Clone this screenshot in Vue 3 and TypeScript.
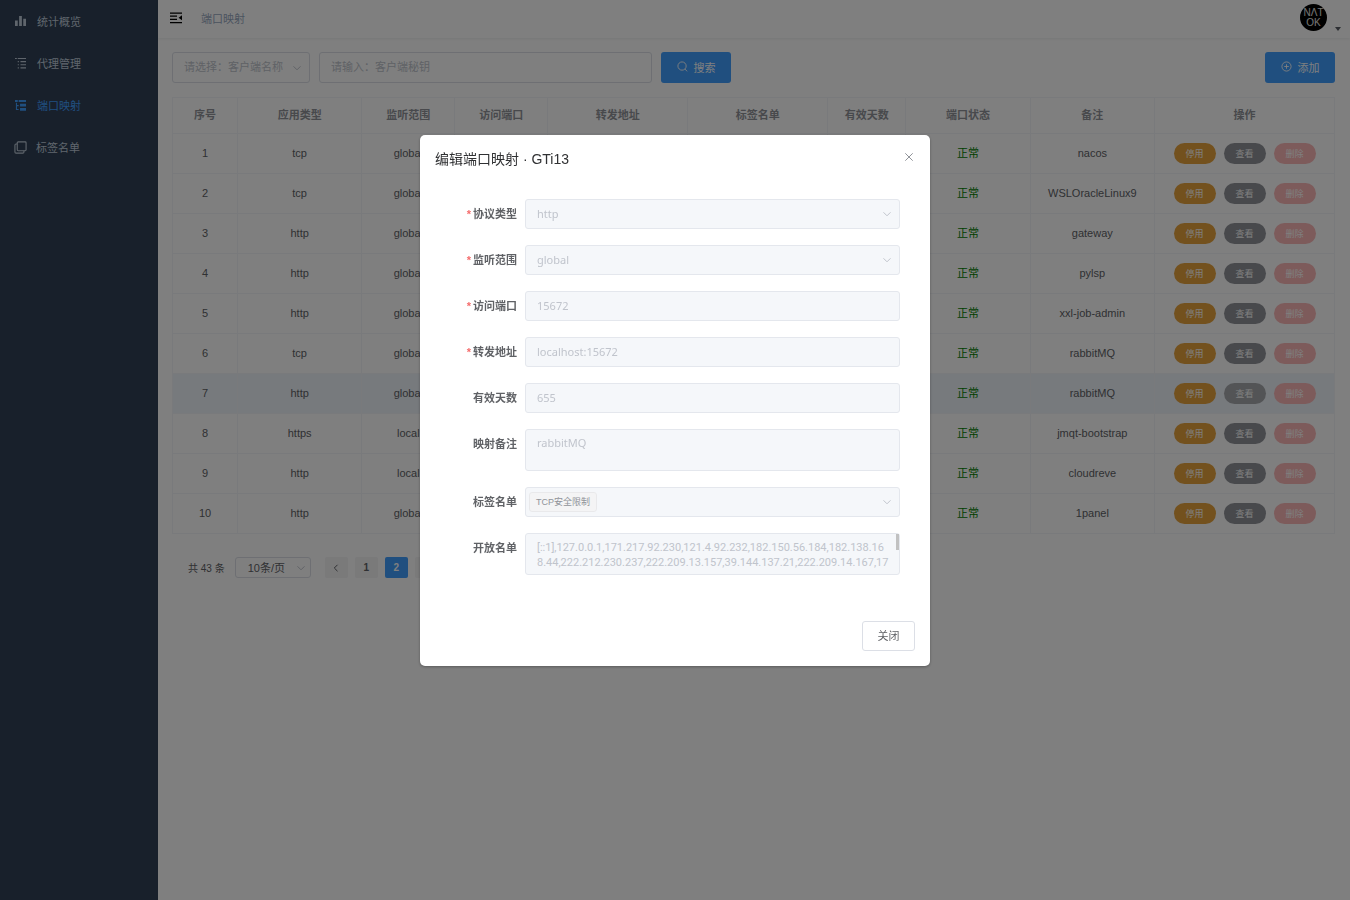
<script setup lang="ts">
import { ref } from 'vue'

interface Mapping {
  id: number
  type: string
  scope: string
  remark: string
}

const rows: Mapping[] = [
  { id: 1, type: 'tcp', scope: 'global', remark: 'nacos' },
  { id: 2, type: 'tcp', scope: 'global', remark: 'WSLOracleLinux9' },
  { id: 3, type: 'http', scope: 'global', remark: 'gateway' },
  { id: 4, type: 'http', scope: 'global', remark: 'pylsp' },
  { id: 5, type: 'http', scope: 'global', remark: 'xxl-job-admin' },
  { id: 6, type: 'tcp', scope: 'global', remark: 'rabbitMQ' },
  { id: 7, type: 'http', scope: 'global', remark: 'rabbitMQ' },
  { id: 8, type: 'https', scope: 'local', remark: 'jmqt-bootstrap' },
  { id: 9, type: 'http', scope: 'local', remark: 'cloudreve' },
  { id: 10, type: 'http', scope: 'global', remark: '1panel' },
]

const activeRow = ref(7)
const page = ref(2)
const pages = [1, 2, 3, 4, 5]
const dialogOpen = ref(true)
const remark = ref('rabbitMQ')
const openList = ref(
  '[::1],127.0.0.1,171.217.92.230,121.4.92.232,182.150.56.184,182.138.168.44,222.212.230.237,222.209.13.157,39.144.137.21,222.209.14.167,17',
)
</script>

<template>
  <div class="layout">
    <nav class="sidebar">
      <a href="#" class="menu-item">
        <svg viewBox="0 0 12 12" class="menu-icon"><path fill="currentColor" d="M0 5h3v6H0zM4.500 0h3v11h-3zM9 3h3v8H9z" /></svg>
        <span>统计概览</span>
      </a>
      <a href="#" class="menu-item">
        <svg viewBox="0 0 12 12" class="menu-icon"><path fill="currentColor" d="M0 0h2v1.200H0zM3 0h9v1.200H3zM3 3.400h1.200v1.200H3zM6 3.400h6v1.200H6zM3 6.800h1.200V8H3zM6 6.800h6V8H6zM3 10.200h1.200v1.200H3zM6 10.200h6v1.200H6z" /></svg>
        <span>代理管理</span>
      </a>
      <a href="#" class="menu-item active">
        <svg viewBox="0 0 12 12" class="menu-icon"><path fill="currentColor" d="M0 0h3v2.200H0zM4 0h8v2.200H4zM1 3h1.200v2.500H4v1.200H2.200v3H4v1.200H1zM5.500 4h6.500v3.200H5.500zM5.500 8.600h6.500v3.200H5.500z" /></svg>
        <span>端口映射</span>
      </a>
      <a href="#" class="menu-item copy">
        <svg viewBox="0 0 14 14" class="menu-icon"><g fill="none" stroke="currentColor" stroke-width="1.200"><rect x="3.500" y="1" width="9.500" height="9.500" rx="1" /><path d="M3.500 3.300H2.200q-1.200 0-1.200 1.200v7.300Q1 13 2.200 13h7.300q1.200 0 1.200-1.200v-1.300" /></g></svg>
        <span>标签名单</span>
      </a>
    </nav>

    <div class="main">
      <header class="navbar">
        <button type="button" class="fold" aria-label="收起菜单">
          <svg viewBox="0 0 12 12"><path fill="#000" d="M0 .500h12v1.200H0zM0 3.500h7v1.200H0zM0 6.800h7V8H0zM0 10h12v1.200H0zM12 3.200v5L8.600 5.700z" /></svg>
        </button>
        <span class="crumb">端口映射</span>
        <button type="button" class="user" aria-label="用户菜单">
          <span class="avatar"><span>NΛT</span><span>OK</span></span>
          <svg viewBox="0 0 6 4" class="caret"><path fill="#5a5e66" d="M0 0h6L3 4z" /></svg>
        </button>
      </header>

      <main class="content">
        <div class="filters">
          <div class="select-wrap filter-type">
            <select aria-label="查询方式"><option>请选择：客户端名称</option></select>
            <svg viewBox="0 0 8 8" class="chevron"><path d="m.500 2.300 3.500 3.500 3.500-3.500" /></svg>
          </div>
          <input class="filter-key" type="text" aria-label="客户端秘钥" placeholder="请输入：客户端秘钥" />
          <button type="button" class="primary">
            <svg viewBox="0 0 12 12"><g fill="none" stroke="currentColor"><circle cx="5.500" cy="5.500" r="4.500" /><path d="m8.800 8.800 2.200 2.500" /></g></svg>
            搜索
          </button>
          <button type="button" class="primary add">
            <svg viewBox="0 0 12 12"><g fill="none" stroke="currentColor"><circle cx="6" cy="6" r="5" /><path d="M6 3.500v5M3.500 6h5" /></g></svg>
            添加
          </button>
        </div>

        <table class="grid">
          <colgroup>
            <col class="c-id" /><col /><col class="c-mid" /><col class="c-mid" /><col class="c-wide" />
            <col class="c-wide" /><col class="c-days" /><col /><col /><col class="c-ops" />
          </colgroup>
          <thead>
            <tr>
              <th>序号</th><th>应用类型</th><th>监听范围</th><th>访问端口</th><th>转发地址</th>
              <th>标签名单</th><th>有效天数</th><th>端口状态</th><th>备注</th><th>操作</th>
            </tr>
          </thead>
          <tbody>
            <tr v-for="row in rows" :key="row.id" :class="{ current: row.id === activeRow }">
              <td>{{ row.id }}</td>
              <td>{{ row.type }}</td>
              <td>{{ row.scope }}</td>
              <td></td>
              <td></td>
              <td></td>
              <td></td>
              <td class="ok">正常</td>
              <td>{{ row.remark }}</td>
              <td>
                <div class="ops">
                  <button type="button" class="pill warn">停用</button>
                  <button type="button" class="pill info" @click="dialogOpen = true">查看</button>
                  <button type="button" class="pill danger" disabled>删除</button>
                </div>
              </td>
            </tr>
          </tbody>
        </table>

        <div class="pagination">
          <span class="total">共 43 条</span>
          <div class="select-wrap page-size">
            <select aria-label="每页条数"><option>10条/页</option></select>
            <svg viewBox="0 0 8 8" class="chevron"><path d="m.500 2.300 3.500 3.500 3.500-3.500" /></svg>
          </div>
          <div class="pager">
            <button type="button" aria-label="上一页"><svg viewBox="0 0 8 8"><path d="M5.500 .800 2.300 4l3.200 3.200" /></svg></button>
            <button v-for="p in pages" :key="p" type="button" :class="{ on: p === page }" @click="page = p">{{ p }}</button>
            <button type="button" aria-label="下一页"><svg viewBox="0 0 8 8"><path d="M2.500 .800 5.700 4 2.500 7.200" /></svg></button>
          </div>
        </div>
      </main>
    </div>

    <div v-if="dialogOpen" class="mask">
      <section class="dialog" role="dialog" aria-modal="true" aria-labelledby="dialog-title">
        <div class="dialog-head">
          <h2 id="dialog-title">编辑端口映射 · GTi13</h2>
          <button type="button" class="close" aria-label="关闭窗口" @click="dialogOpen = false">
            <svg viewBox="0 0 10 10"><path d="m1.300 1.300 7.400 7.400M8.700 1.300 1.300 8.700" /></svg>
          </button>
        </div>
        <form class="form" @submit.prevent>
          <div class="item required">
            <label for="f-type">协议类型</label>
            <div class="select-wrap">
              <select id="f-type" disabled><option>http</option></select>
              <svg viewBox="0 0 8 8" class="chevron"><path d="m.500 2.300 3.500 3.500 3.500-3.500" /></svg>
            </div>
          </div>
          <div class="item required">
            <label for="f-scope">监听范围</label>
            <div class="select-wrap">
              <select id="f-scope" disabled><option>global</option></select>
              <svg viewBox="0 0 8 8" class="chevron"><path d="m.500 2.300 3.500 3.500 3.500-3.500" /></svg>
            </div>
          </div>
          <div class="item required">
            <label for="f-port">访问端口</label>
            <input id="f-port" type="text" value="15672" disabled />
          </div>
          <div class="item required">
            <label for="f-target">转发地址</label>
            <input id="f-target" type="text" value="localhost:15672" disabled />
          </div>
          <div class="item">
            <label for="f-days">有效天数</label>
            <input id="f-days" type="text" value="655" disabled />
          </div>
          <div class="item">
            <label for="f-remark">映射备注</label>
            <textarea id="f-remark" v-model="remark" disabled></textarea>
          </div>
          <div class="item">
            <label for="f-tags">标签名单</label>
            <div class="select-wrap">
              <select id="f-tags" disabled></select>
              <span class="tag">TCP安全限制</span>
              <svg viewBox="0 0 8 8" class="chevron"><path d="m.500 2.300 3.500 3.500 3.500-3.500" /></svg>
            </div>
          </div>
          <div class="item">
            <label for="f-open">开放名单</label>
            <div class="list-wrap">
              <textarea id="f-open" v-model="openList" class="list" disabled></textarea>
              <span class="thumb"></span>
            </div>
          </div>
        </form>
        <div class="dialog-foot">
          <button type="button" class="plain" @click="dialogOpen = false">关闭</button>
        </div>
      </section>
    </div>
  </div>
</template>

<style>
body {
  margin: 0;
  background: #fff;
}
</style>

<style scoped>
* {
  box-sizing: border-box;
}
.layout {
  display: flex;
  min-height: 100vh;
  color: #606266;
  font-family: "Liberation Sans", "Noto Sans CJK SC", sans-serif;
  font-size: 11px;
}
button,
input,
select,
textarea {
  margin: 0;
  font-family: inherit;
  font-size: 11px;
}
button {
  padding: 0;
  border: 0;
  background: none;
  cursor: pointer;
}
svg {
  display: block;
  flex: none;
}

.sidebar {
  flex: none;
  width: 158px;
  background: #304156;
}
.menu-item {
  display: flex;
  align-items: center;
  gap: 11px;
  height: 42px;
  padding-left: 15px;
  color: #bfcbd9;
  text-decoration: none;
}
.menu-item.active {
  color: #409eff;
}
.menu-item.copy {
  gap: 9px;
  padding-left: 14px;
}
.menu-icon {
  width: 11px;
  height: 11px;
}
.copy .menu-icon {
  width: 13px;
  height: 13px;
}

.main {
  flex: 1;
  min-width: 0;
}
.navbar {
  display: flex;
  align-items: center;
  height: 38px;
  padding: 0 9px 3px 12px;
  box-shadow: 0 1px 3px rgba(0, 21, 41, 0.08);
}
.fold svg {
  width: 12px;
  height: 12px;
}
.crumb {
  margin-left: 19px;
  color: #97a8be;
}
.user {
  display: flex;
  align-items: flex-end;
  gap: 8px;
  margin-left: auto;
}
.avatar {
  display: flex;
  flex-direction: column;
  align-items: center;
  justify-content: center;
  width: 27px;
  height: 27px;
  border-radius: 50%;
  background: #000;
  color: #e8e8e8;
  font-size: 10px;
  line-height: 10px;
}
.caret {
  width: 6px;
  height: 4px;
}

.content {
  padding: 14px 15px 14px 14px;
}
.filters {
  display: flex;
  gap: 9px;
  margin-bottom: 14px;
}
.select-wrap {
  position: relative;
  flex: 1;
  min-width: 0;
}
.chevron {
  position: absolute;
  top: 50%;
  right: 9px;
  width: 8px;
  height: 8px;
  margin-top: -4px;
  pointer-events: none;
}
.chevron path,
.pager path,
.close path {
  fill: none;
  stroke: #c0c4cc;
  stroke-width: 1;
}
input,
select,
textarea {
  display: block;
  width: 100%;
  height: 30px;
  padding: 0 11px;
  border: 1px solid #dcdfe6;
  border-radius: 3px;
  outline: 0;
  background: #fff;
  color: #c0c4cc;
  appearance: none;
}
input::placeholder {
  color: #c0c4cc;
  opacity: 1;
}
.filter-type {
  flex: 0 0 138px;
}
.filter-key {
  flex: 0 1 333px;
}
.filters .select-wrap select,
.filter-key {
  height: 31px;
  padding-bottom: 2px;
}
.primary {
  display: flex;
  flex: none;
  align-items: center;
  justify-content: center;
  gap: 6px;
  width: 70px;
  height: 31px;
  padding-bottom: 2px;
  border-radius: 3px;
  background: #409eff;
  color: #fff;
}
.primary svg {
  width: 11px;
  height: 11px;
}
.add {
  margin-left: auto;
}

.grid {
  width: 100%;
  table-layout: fixed;
  border-collapse: collapse;
  text-align: center;
}
.c-id {
  width: 65px;
}
.c-mid {
  width: 93px;
}
.c-wide {
  width: 140px;
}
.c-days {
  width: 78px;
}
.c-ops {
  width: 180px;
}
.grid th,
.grid td {
  height: 40px;
  padding: 0 0 1px;
  border: 1px solid #f3f4f8;
}
.grid th {
  height: 36px;
  padding-bottom: 3px;
  color: #909399;
  font-weight: 700;
}
.grid .current {
  background: #eff4fa;
}
.grid .ok {
  padding-bottom: 3px;
  color: #008000;
}
.ops {
  display: flex;
  justify-content: center;
  gap: 8px;
}
.pill {
  width: 42px;
  height: 21px;
  border-radius: 11px;
  color: #fff;
  font-size: 9px;
}
.warn {
  background: #e6a23c;
}
.info {
  background: #909399;
}
.current .info {
  background: #a6a9ad;
}
.danger {
  background: #fab6b6;
}

.pagination {
  display: flex;
  align-items: center;
  margin-top: 23px;
  padding-left: 16px;
}
.total {
  margin-right: 10px;
  padding-bottom: 1px;
  font-size: 10px;
}
.page-size {
  flex: 0 0 76px;
}
.page-size select {
  height: 21px;
  padding: 0 12px;
  color: #606266;
}
.page-size .chevron {
  right: 6px;
}
.pager {
  display: flex;
  gap: 7px;
  margin-left: 14px;
}
.pager button {
  display: flex;
  align-items: center;
  justify-content: center;
  width: 23px;
  height: 21px;
  border-radius: 2px;
  background: #f4f4f5;
  color: #606266;
  font-size: 10px;
  font-weight: 700;
}
.pager svg {
  width: 8px;
  height: 8px;
}
.pager path {
  stroke: #606266;
}
.pager .on {
  background: #409eff;
  color: #fff;
}

.mask {
  position: fixed;
  inset: 0;
  overflow: auto;
  background: rgba(0, 0, 0, 0.5);
}
.dialog {
  width: 510px;
  max-width: 100%;
  margin: 15vh auto 0;
  border-radius: 5px;
  background: #fff;
  box-shadow: 0 1px 3px rgba(0, 0, 0, 0.3);
}
.dialog-head {
  display: flex;
  align-items: center;
  justify-content: space-between;
  padding: 14px 16px 0 15px;
}
.dialog-head h2 {
  margin: 0;
  color: #303133;
  font-size: 14px;
  font-weight: 400;
  line-height: 20px;
}
.close {
  margin-bottom: 4px;
}
.close svg {
  width: 10px;
  height: 10px;
}
.close path {
  stroke: #909399;
}
.form {
  display: flex;
  flex-direction: column;
  gap: 16px;
  padding: 30px 30px 46px 15px;
}
.item {
  display: flex;
}
.item label {
  flex: none;
  width: 90px;
  padding-right: 8px;
  font-weight: 700;
  line-height: 30px;
  text-align: right;
}
.required label::before {
  content: "*";
  margin-right: 2px;
  color: #f56c6c;
}
.item input,
.item select,
.item textarea {
  padding-bottom: 2px;
  border-color: #e4e7ed;
  background: #f5f7fa;
  color: #c0c4cc;
  font-family: "Noto Sans", "Noto Sans CJK SC", sans-serif;
  opacity: 1;
}
.item textarea {
  height: 42px;
  padding: 5px 11px;
  line-height: 15px;
  resize: none;
}
.list-wrap {
  position: relative;
  flex: 1;
  min-width: 0;
}
.item .list {
  padding: 6px 6px 4px 11px;
  overflow: hidden;
  font-family: Roboto, "Noto Sans CJK SC", sans-serif;
  word-break: break-all;
}
.thumb {
  position: absolute;
  top: 1px;
  right: 1px;
  width: 3px;
  height: 16px;
  background: #c1c1c1;
}
.tag {
  position: absolute;
  top: 5px;
  left: 4px;
  padding: 0 6px;
  border: 1px solid #e9e9eb;
  border-radius: 3px;
  background: #f4f4f5;
  color: #909399;
  font-size: 9px;
  line-height: 18px;
}
.dialog-foot {
  display: flex;
  justify-content: flex-end;
  padding: 0 15px 15px;
}
.plain {
  width: 53px;
  height: 30px;
  padding-bottom: 2px;
  border: 1px solid #dcdfe6;
  border-radius: 3px;
  background: #fff;
  color: #606266;
}
</style>
